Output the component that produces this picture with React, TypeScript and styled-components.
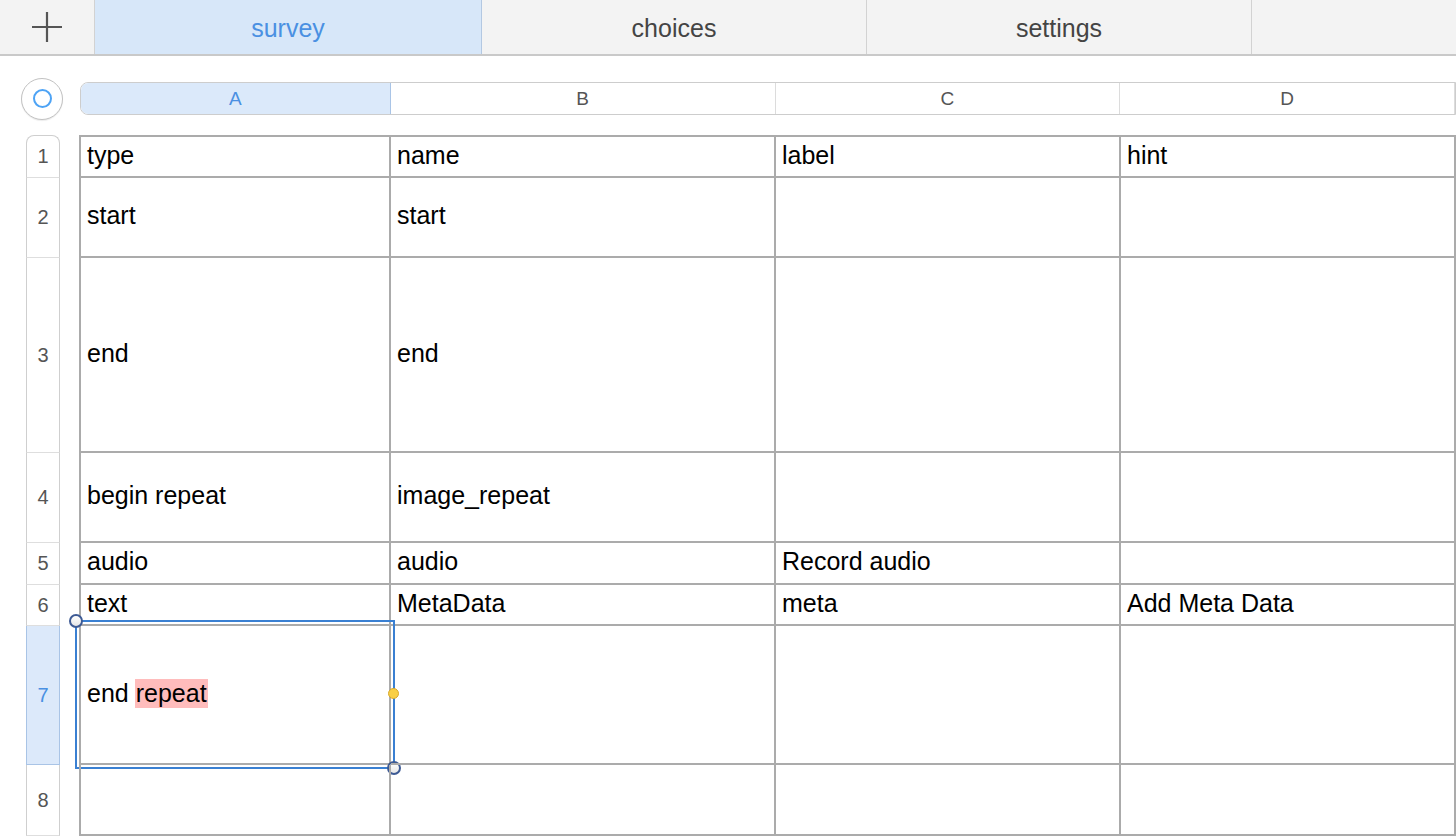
import styled, { createGlobalStyle } from "styled-components"

const GlobalStyle = createGlobalStyle`
  html, body {
    margin: 0;
    padding: 0;
    background: #ffffff;
    overflow: hidden;
  }
  body {
    font-family: "Liberation Sans", Arial, Helvetica, sans-serif;
  }
`

const tabs = ["survey", "choices", "settings"]

const columns = [
    { key: "A", width: 312, head: 310 },
    { key: "B", width: 385, head: 385 },
    { key: "C", width: 345, head: 345 },
    { key: "D", width: 335, head: 335 },
]

const rows = [
    { height: 43, cells: ["type", "name", "label", "hint"] },
    { height: 80, cells: ["start", "start", "", ""] },
    { height: 195, cells: ["end", "end", "", ""] },
    { height: 90, cells: ["begin repeat", "image_repeat", "", ""] },
    { height: 42, cells: ["audio", "audio", "Record audio", ""] },
    { height: 41, cells: ["text", "MetaData", "meta", "Add Meta Data"] },
    { height: 139, cells: ["", "", "", ""], selected: true },
    { height: 71, cells: ["", "", "", ""] },
]

const App = () => {
    return (
        <Page>
            <GlobalStyle />
            <TabBar>
                <AddButton>
                    <svg width="32" height="32" viewBox="0 0 32 32">
                        <path d="M16 1 V31 M1 16 H31" stroke="#555" strokeWidth="2.2" fill="none" />
                    </svg>
                </AddButton>
                {tabs.map((tab, i) => (
                    <Tab key={tab} $active={i === 0} $width={i === 0 ? 387 : 385}>
                        {tab}
                    </Tab>
                ))}
                <TabFiller />
            </TabBar>

            <ColumnBar>
                <CornerArea>
                    <SelectAll>
                        <SelectAllRing />
                    </SelectAll>
                </CornerArea>
                <ColumnHeads>
                    {columns.map((col, i) => (
                        <ColumnHead key={col.key} $width={col.head} $active={i === 0} $first={i === 0}>
                            {col.key}
                        </ColumnHead>
                    ))}
                </ColumnHeads>
            </ColumnBar>

            <Sheet>
                {rows.map((row, r) => (
                    <Row key={r}>
                        <RowHead $height={row.height} $first={r === 0} $active={!!row.selected}>
                            {r + 1}
                        </RowHead>
                        {row.cells.map((text, c) => (
                            <Cell key={c} $height={row.height} $first={c === 0} $top={r === 0}>
                                {row.selected && c === 0 ? (
                                    <>
                                        end <Flag>repeat</Flag>
                                        <Selection>
                                            <Handle $x={-8} $y={-8} />
                                            <Handle $x={310} $y={139} />
                                            <Grip $x={311} $y={66} />
                                        </Selection>
                                    </>
                                ) : (
                                    text
                                )}
                            </Cell>
                        ))}
                    </Row>
                ))}
            </Sheet>
        </Page>
    )
}

export default App

const Page = styled.div`
    width: 1456px;
    height: 836px;
    overflow: hidden;
    display: flex;
    flex-direction: column;
    background: #ffffff;
`

const TabBar = styled.div`
    display: flex;
    height: 54px;
    flex-shrink: 0;
    background: #f3f3f3;
    border-bottom: 2px solid #c9c9c9;
`

const AddButton = styled.div`
    width: 95px;
    box-sizing: border-box;
    border-right: 1px solid #d2d2d2;
    display: flex;
    align-items: center;
    justify-content: center;
`

const Tab = styled.div<{ $active?: boolean; $width: number }>`
    width: ${(p) => p.$width}px;
    box-sizing: border-box;
    display: flex;
    align-items: center;
    justify-content: center;
    padding-top: 2px;
    font-size: 25px;
    color: ${(p) => (p.$active ? "#4a90e2" : "#444444")};
    background: ${(p) => (p.$active ? "#d7e7f9" : "transparent")};
    border-right: 1px solid ${(p) => (p.$active ? "#b3c8e2" : "#d2d2d2")};
`

const TabFiller = styled.div`
    flex: 1;
`

const ColumnBar = styled.div`
    display: flex;
    align-items: center;
    height: 33px;
    margin-top: 26px;
`

const CornerArea = styled.div`
    width: 80px;
    flex-shrink: 0;
    display: flex;
    align-items: center;
    padding-left: 21px;
    box-sizing: border-box;
`

const SelectAll = styled.div`
    width: 42px;
    height: 42px;
    box-sizing: border-box;
    border-radius: 50%;
    border: 1px solid #c2c2c2;
    background: #ffffff;
    box-shadow: 0 1px 1px rgba(0, 0, 0, 0.08);
    display: flex;
    align-items: center;
    justify-content: center;
`

const SelectAllRing = styled.div`
    width: 19px;
    height: 19px;
    box-sizing: border-box;
    border-radius: 50%;
    border: 2px solid #4da3f5;
`

const ColumnHeads = styled.div`
    display: flex;
    height: 33px;
    box-sizing: border-box;
    border: 1px solid #cdcdcd;
    border-radius: 8px 0 0 8px;
    overflow: hidden;
`

const ColumnHead = styled.div<{ $width: number; $active?: boolean; $first?: boolean }>`
    width: ${(p) => p.$width}px;
    box-sizing: border-box;
    display: flex;
    align-items: center;
    justify-content: center;
    font-size: 19px;
    color: ${(p) => (p.$active ? "#4a90e2" : "#555555")};
    background: ${(p) => (p.$active ? "#dbe9fa" : "#ffffff")};
    border-right: 1px solid ${(p) => (p.$active ? "#a9c4e6" : "#dcdcdc")};
    border-radius: ${(p) => (p.$first ? "7px 0 0 7px" : "0")};
`

const Sheet = styled.div`
    display: grid;
    grid-template-columns: 79px ${columns.map((c) => `${c.width}px`).join(" ")};
    margin-top: 20px;
`

const Row = styled.div`
    display: contents;
`

const RowHead = styled.div<{ $height: number; $first?: boolean; $active?: boolean }>`
    height: ${(p) => p.$height}px;
    margin-left: 26px;
    width: 34px;
    box-sizing: border-box;
    display: flex;
    align-items: center;
    justify-content: center;
    font-size: 20px;
    color: ${(p) => (p.$active ? "#4a90e2" : "#555555")};
    background: ${(p) => (p.$active ? "#dce9fa" : "#ffffff")};
    border-left: 1px solid ${(p) => (p.$active ? "#a9c4e6" : "#cfcfcf")};
    border-right: 1px solid ${(p) => (p.$active ? "#a9c4e6" : "#cfcfcf")};
    border-bottom: 1px solid ${(p) => (p.$active ? "#a9c4e6" : "#dedede")};
    border-top: ${(p) => (p.$first ? "1px solid #cfcfcf" : "none")};
    border-radius: ${(p) => (p.$first ? "8px 8px 0 0" : "0")};
`

const Cell = styled.div<{ $height: number; $first?: boolean; $top?: boolean }>`
    position: relative;
    height: ${(p) => p.$height}px;
    box-sizing: border-box;
    display: flex;
    align-items: center;
    padding: 0 0 3px 6px;
    font-size: 25px;
    color: #000000;
    white-space: nowrap;
    border-right: 2px solid #ababab;
    border-bottom: 2px solid #ababab;
    border-left: ${(p) => (p.$first ? "2px solid #ababab" : "none")};
    border-top: ${(p) => (p.$top ? "2px solid #ababab" : "none")};
`

const Flag = styled.span`
    background: #ffbcbc;
    margin-left: 6px;
    padding: 0 1px;
`

const Selection = styled.div`
    position: absolute;
    left: -6px;
    top: -6px;
    width: 320px;
    height: 149px;
    box-sizing: border-box;
    border: 2px solid #3a80d2;
    pointer-events: none;
`

const Handle = styled.div<{ $x: number; $y: number }>`
    position: absolute;
    left: ${(p) => p.$x}px;
    top: ${(p) => p.$y}px;
    width: 14px;
    height: 14px;
    box-sizing: border-box;
    border-radius: 50%;
    border: 2px solid #3d5a94;
    background: linear-gradient(#ffffff, #e6e6e6);
`

const Grip = styled.div<{ $x: number; $y: number }>`
    position: absolute;
    left: ${(p) => p.$x}px;
    top: ${(p) => p.$y}px;
    width: 11px;
    height: 11px;
    box-sizing: border-box;
    border-radius: 50%;
    border: 1px solid #d8a92c;
    background: #f9cf45;
`
